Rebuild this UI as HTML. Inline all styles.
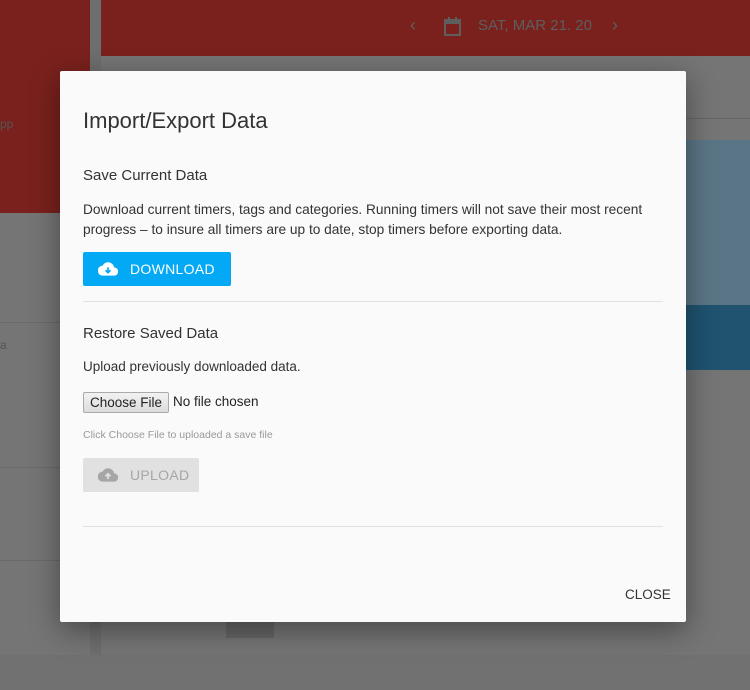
<!DOCTYPE html>
<html><head><style>
body{margin:0;width:750px;height:690px;position:relative;overflow:hidden;font-family:"Liberation Sans",sans-serif}
.a{position:absolute}
.modal{left:60px;top:71px;width:626px;height:551px;background:#fafafa;box-shadow:0 8px 30px rgba(0,0,0,.4);border-radius:2px}
.m{position:absolute;color:#333}
.btn{position:absolute;height:34px;border-radius:2px;font-size:14px;letter-spacing:.3px}
</style></head><body>
<svg class="a" style="left:0;top:0" width="750" height="690">
<rect width="750" height="690" fill="#757575"/>
<rect x="0" y="0" width="90" height="213" fill="#7a211d"/>
<rect x="101" y="0" width="649" height="56" fill="#7a211d"/>
<rect x="90" y="0" width="11" height="690" fill="#6e6e6e"/>
<rect x="686" y="118" width="64" height="1" fill="#666"/>
<rect x="686" y="140" width="64" height="165" fill="#5a7585"/>
<rect x="686" y="305" width="64" height="65" fill="#1f5370"/>
<rect x="0" y="322" width="90" height="1" fill="#6a6a6a"/>
<rect x="0" y="467" width="90" height="1" fill="#6a6a6a"/>
<rect x="0" y="560" width="90" height="1" fill="#6a6a6a"/>
<rect x="0" y="655" width="750" height="35" fill="#717171"/>
<rect x="226" y="620" width="48" height="18" fill="#666"/>
<rect x="445" y="20" width="15" height="15" fill="none" stroke="#5e5e5e" stroke-width="2"/>
<rect x="445" y="20" width="15" height="4" fill="#5e5e5e"/>
<rect x="448" y="17" width="2" height="4" fill="#5e5e5e"/>
<rect x="455" y="17" width="2" height="4" fill="#5e5e5e"/>
</svg>
<div class="a" style="left:0;top:117px;color:#555;font-size:12px">pp</div>
<div class="a" style="left:0;top:338px;color:#555;font-size:12px">a</div>
<div class="a" style="left:410px;top:15px;color:#5e5e5e;font-size:18px">‹</div>
<div class="a" style="left:478px;top:17px;color:#5e5e5e;font-size:15px">SAT, MAR 21. 20</div>
<div class="a" style="left:612px;top:15px;color:#5e5e5e;font-size:18px">›</div>

<div class="a modal">
<div class="m" style="left:23px;top:37px;font-size:22px">Import/Export Data</div>
<div class="m" style="left:23px;top:96px;font-size:15px">Save Current Data</div>
<div class="m" style="left:23px;top:129px;font-size:13.7px;line-height:20px;width:600px">Download current timers, tags and categories. Running timers will not save their most recent progress – to insure all timers are up to date, stop timers before exporting data.</div>
<div class="btn" style="left:23px;top:181px;width:148px;background:#03a9f4;color:#fff">
<svg style="position:absolute;left:15px;top:10px" width="20" height="14" viewBox="0 0 24 16"><path d="M19.4 6A7.5 7.5 0 0 0 5.4 4 6 6 0 0 0 6 16h13a5 5 0 0 0 .4-10z" fill="#fff"/><path d="M12 6v6M9 9.5l3 3 3-3" stroke="#03a9f4" stroke-width="2" fill="none"/></svg>
<span style="position:absolute;left:47px;top:9px">DOWNLOAD</span></div>
<div class="a" style="left:23px;top:230px;width:580px;height:1px;background:#e2e2e2"></div>
<div class="m" style="left:23px;top:254px;font-size:15px">Restore Saved Data</div>
<div class="m" style="left:23px;top:288px;font-size:13.5px">Upload previously downloaded data.</div>
<div class="a" style="left:23px;top:321px;width:84px;height:19px;border:1px solid #aaa;border-radius:2px;background:linear-gradient(#f2f2f2,#dcdcdc);font-size:13.5px;color:#222;text-align:center;line-height:19px">Choose File</div>
<div class="m" style="left:113px;top:323px;font-size:13.5px;color:#222">No file chosen</div>
<div class="m" style="left:23px;top:358px;font-size:10.5px;color:#999">Click Choose File to uploaded a save file</div>
<div class="btn" style="left:23px;top:387px;width:116px;background:#e1e1e1;color:#a6a6a6">
<svg style="position:absolute;left:15px;top:10px" width="20" height="14" viewBox="0 0 24 16"><path d="M19.4 6A7.5 7.5 0 0 0 5.4 4 6 6 0 0 0 6 16h13a5 5 0 0 0 .4-10z" fill="#a6a6a6"/><path d="M12 13V7M9 9.5l3-3 3 3" stroke="#e1e1e1" stroke-width="2" fill="none"/></svg>
<span style="position:absolute;left:47px;top:9px">UPLOAD</span></div>
<div class="a" style="left:23px;top:455px;width:580px;height:1px;background:#e2e2e2"></div>
<div class="m" style="left:565px;top:516px;font-size:13.5px">CLOSE</div>
</div>
</body></html>
